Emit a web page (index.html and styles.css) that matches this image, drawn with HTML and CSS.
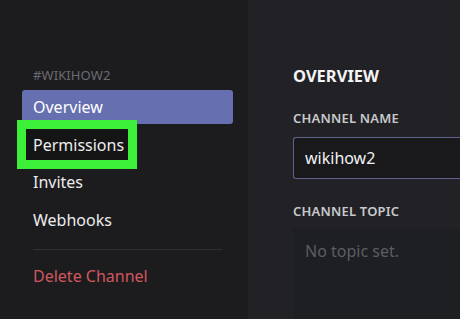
FILE: index.html
```html
<!DOCTYPE html>
<html>
<head>
<meta charset="utf-8">
<link rel="stylesheet" href="styles.css">
</head>
<body>
<div class="app">
  <aside class="sidebar">
    <div class="side-header">#wikihow2</div>
    <nav class="nav">
      <div class="nav-item active"><span>Overview</span></div>
      <div class="nav-item marked"><span>Permissions</span></div>
      <div class="nav-item"><span>Invites</span></div>
      <div class="nav-item"><span>Webhooks</span></div>
      <div class="separator"></div>
      <div class="nav-item danger"><span>Delete Channel</span></div>
    </nav>
  </aside>
  <main class="content">
    <h2 class="title">Overview</h2>
    <div class="label">Channel Name</div>
    <div class="input">wikihow2</div>
    <div class="label label-topic">Channel Topic</div>
    <div class="textarea">No topic set.</div>
  </main>
</div>
</body>
</html>
```

FILE: styles.css
```css
*, *::before, *::after { box-sizing: border-box; margin: 0; padding: 0; }
html, body { width: 460px; height: 319px; overflow: hidden; }
body {
  background: #222226;
  font-family: "Noto Sans", "Open Sans", sans-serif;
  color: #f0f0f2;
}
.app { display: flex; height: 319px; }
.sidebar {
  width: 248px;
  flex: none;
  background: #1c1c1f;
  padding: 67px 15px 0 22px;
  isolation: isolate;
}
.side-header {
  font-size: 13px;
  line-height: 16px;
  text-transform: uppercase;
  color: #6b6b70;
  padding-left: 11px;
  letter-spacing: 0.1px;
  margin-bottom: 7px;
}
.nav { display: flex; flex-direction: column; gap: 3.5px; }
.nav-item {
  position: relative;
  height: 34px;
  line-height: 34px;
  font-size: 16px;
  padding-left: 11px;
  border-radius: 3px;
  color: #ececee;
}
.nav-item span { position: relative; }
.nav-item.active { background: #6670b0; color: #fff; }
.nav-item.marked::before {
  content: "";
  position: absolute;
  left: -5px;
  top: -7.5px;
  width: 120px;
  height: 49px;
  border: 9px solid #3cf03a;
  background: #151516;
}
.separator {
  height: 1px;
  background: #2f2f34;
  margin: 9px 0 5.5px 11px;
  width: 189px;
}
.nav-item.danger { color: #d0575d; }
.content {
  flex: 1;
  padding: 66px 0 0 45px;
  display: flex;
  flex-direction: column;
}
.title {
  font-size: 16.5px;
  line-height: 20px;
  font-weight: 700;
  text-transform: uppercase;
  color: #f4f4f6;
  margin-bottom: 24px;
}
.label {
  font-size: 13px;
  line-height: 16px;
  font-weight: 600;
  text-transform: uppercase;
  color: #c8c9cd;
  letter-spacing: 0.2px;
  margin-bottom: 11px;
}
.input {
  height: 42px;
  line-height: 40px;
  border: 1px solid #5f6390;
  border-right: none;
  border-radius: 3px 0 0 3px;
  background: #19191c;
  font-size: 16px;
  padding-left: 11px;
  color: #f2f2f4;
}
.label-topic { margin-top: 24px; margin-bottom: 9px; }
.textarea {
  flex: 1;
  background: #1e1f22;
  border-radius: 3px 0 0 0;
  font-size: 16px;
  line-height: 23px;
  padding: 12px 0 0 12px;
  color: #5c5d62;
}
```
